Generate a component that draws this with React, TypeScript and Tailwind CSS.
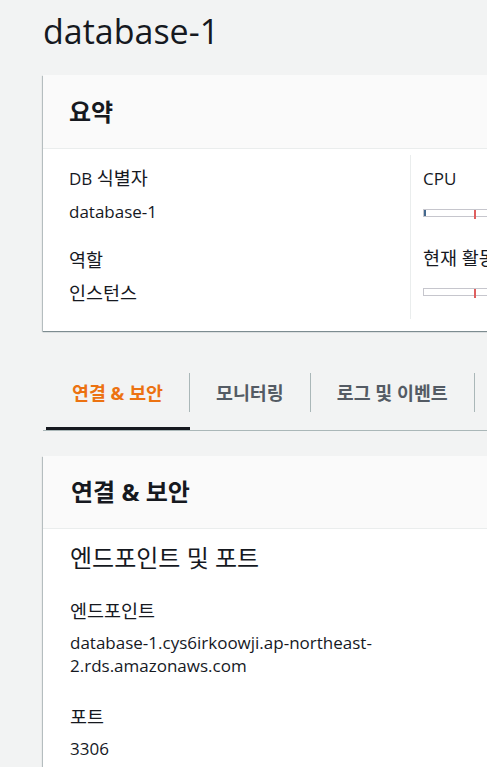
const font = { fontFamily: '"Open Sans", "Noto Sans CJK KR", sans-serif' };

function Bar({ low }: { low?: boolean }) {
    return (
        <div className="relative mt-[19px] h-[8px] w-[360px] border border-[#c6c6cd] bg-white">
            {low && <div className="absolute left-0 top-0 h-full w-[2px] bg-[#44698e]" />}
            <div className="absolute left-[50px] top-[0px] h-[9px] w-[2px] bg-[#df5f5f]" />
        </div>
    );
}

function Tab({ label, active }: { label: string; active?: boolean }) {
    return (
        <div className={active ? 'border-b-[3px] border-[#16191f] pb-[15px]' : 'border-b-[3px] border-transparent pb-[15px]'}>
            <div
                className={
                    'flex h-[39px] items-center border-r border-[#aab7b8] px-[26px] text-[18.4px] font-bold ' +
                    (active ? 'text-[#ec7211]' : 'text-[#545b64]')
                }
            >
                {label}
            </div>
        </div>
    );
}

export default function App() {
    return (
        <div className="min-h-[767px] w-[487px] overflow-hidden bg-[#f2f3f3] text-[#16191f]" style={font}>
            <div className="w-[1000px] pl-[43px] pt-[11px]">
                <h1 className="text-[34px] leading-[40px] font-normal">database-1</h1>

                {/* summary card */}
                <div className="mt-[24px] w-[900px] bg-white shadow-[0_1px_1px_0_rgba(0,28,36,0.35),-1px_1px_1px_0_rgba(0,28,36,0.2)]">
                    <div className="flex h-[74px] items-center border-b border-[#eaeded] bg-[#fafafa] pl-[26px]">
                        <h2 className="text-[24px] font-bold">요약</h2>
                    </div>
                    <div className="flex pt-[6px] pb-[12px]">
                        <div className="w-[368px] border-r border-[#eaeded] pl-[26px] pt-[12px] pb-[15px] text-[17px] leading-[22px]">
                            <div>
                                DB <span className="text-[18.5px]">식별자</span>
                            </div>
                            <div className="mt-[11px]">database-1</div>
                            <div className="mt-[26px] text-[18.5px]">역할</div>
                            <div className="mt-[11px] text-[18.5px]">인스턴스</div>
                        </div>
                        <div className="pl-[12px] pt-[13px] text-[17px] leading-[22px]">
                            <div>CPU</div>
                            <Bar low />
                            <div className="mt-[30px] text-[18.5px]">현재 활동</div>
                            <Bar />
                        </div>
                    </div>
                </div>

                {/* tabs */}
                <div className="mt-[42px] flex w-[900px] border-b border-[#aab7b8] pl-[3px]">
                    <Tab label="연결 & 보안" active />
                    <Tab label="모니터링" />
                    <Tab label="로그 및 이벤트" />
                </div>

                {/* connectivity card */}
                <div className="mt-[25px] w-[900px] bg-white shadow-[0_1px_1px_0_rgba(0,28,36,0.35),-1px_1px_1px_0_rgba(0,28,36,0.2)]">
                    <div className="flex h-[73px] items-center border-b border-[#eaeded] bg-[#fafafa] pl-[28px]">
                        <h2 className="text-[24px] font-bold">연결 &amp; 보안</h2>
                    </div>
                    <div className="pl-[27px] pt-[14px] pb-[20px]">
                        <h3 className="text-[24px] leading-[30px]">엔드포인트 및 포트</h3>
                        <div className="mt-[26px] w-[330px] text-[17px] leading-[23px]">
                            <div className="text-[18.5px]">엔드포인트</div>
                            <div className="mt-[9px]">database-1.cys6irkoowji.ap-northeast-2.rds.amazonaws.com</div>
                            <div className="mt-[28px] text-[18.5px]">포트</div>
                            <div className="mt-[9px]">3306</div>
                        </div>
                    </div>
                </div>
            </div>
        </div>
    );
}
